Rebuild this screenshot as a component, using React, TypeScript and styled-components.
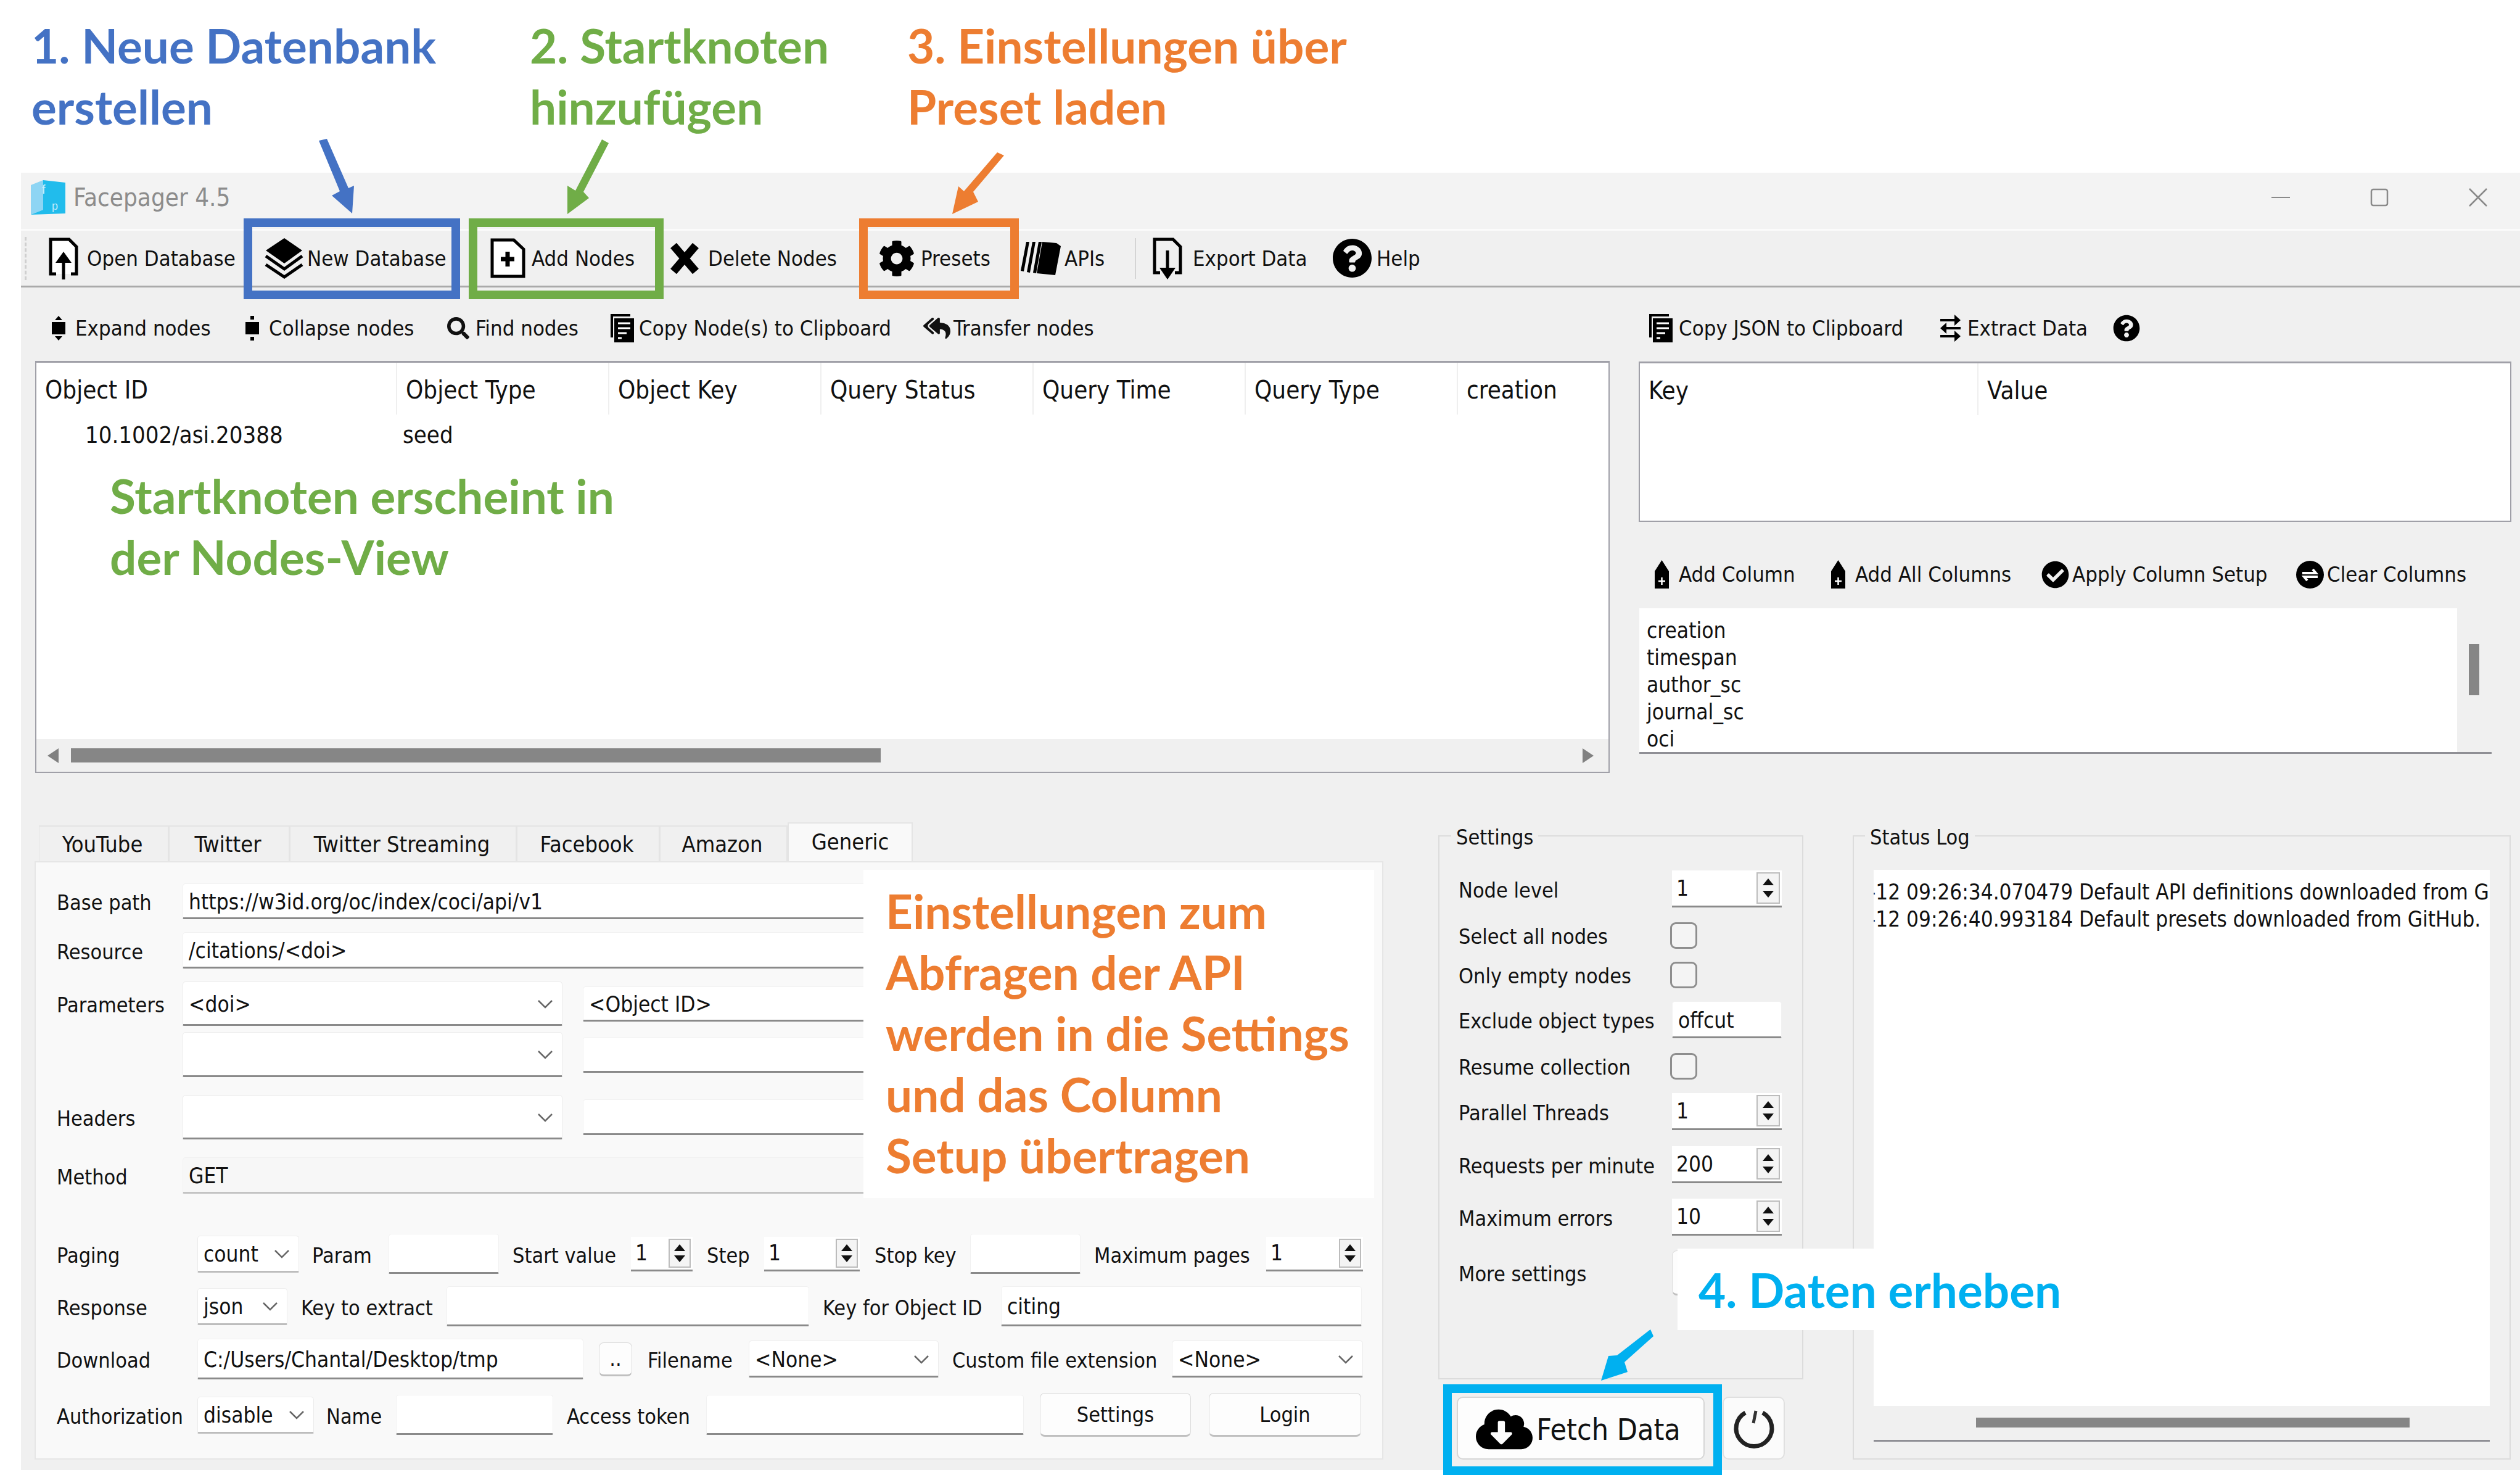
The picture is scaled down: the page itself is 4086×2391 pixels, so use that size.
import styled, { createGlobalStyle } from "styled-components";
import { FaCog, FaQuestionCircle, FaSearch, FaReplyAll, FaCheckCircle, FaCloudDownloadAlt } from "react-icons/fa";

const Global = createGlobalStyle`
  html, body { margin: 0; padding: 0; background: #fff; }
  * { box-sizing: border-box; }
`;

const UI = `"DejaVu Sans Condensed", "DejaVu Sans", sans-serif`;

const Page = styled.div`
  position: relative;
  width: 4086px;
  height: 2391px;
  background: #fff;
  overflow: hidden;
  display: flex;
  flex-direction: column;
  font-family: ${UI};
  color: #111;
`;
const Headings = styled.div`
  height: 280px;
  padding: 24px 0 0 51px;
  display: flex;
`;
const Heading = styled.div<{ $w: number; $c: string }>`
  width: ${(p) => p.$w}px;
  color: ${(p) => p.$c};
  font: 700 76.5px/99px Lato, sans-serif;
`;
const Win = styled.div`
  margin-left: 34px;
  height: 2103px;
  background: #f0f0f0;
`;
const TitleBar = styled.div`
  height: 91px;
  background: #f3f3f3;
  display: flex;
  align-items: center;
  padding: 0 53px 12px 16px;
`;
const Title = styled.span`
  margin-left: 13px;
  color: #8c8c8c;
  font-size: 40px;
  flex: 1;
`;
const WinButtons = styled.div`
  display: flex;
  gap: 130px;
  align-items: center;
`;
const Toolbar = styled.div`
  height: 95px;
  border-top: 3px solid #fbfbfb;
  border-bottom: 3px solid #aaa;
  padding-left: 6px;
  display: flex;
  align-items: center;
`;
const Grip = styled.div`
  width: 38px;
  height: 70px;
  flex: none;
  border-left: 3px dashed #cfcfcf;
`;
const ToolItem = styled.div<{ $w?: number; $gap?: number }>`
  ${(p) => (p.$w ? `width: ${p.$w}px;` : "")}
  flex: none;
  display: flex;
  align-items: center;
  gap: ${(p) => p.$gap ?? 9}px;
  font-size: 34.5px;
  white-space: nowrap;
`;
const Sep = styled.div`
  width: 28px;
  height: 66px;
  flex: none;
  border-left: 2px solid #d4d4d4;
`;
const Upper = styled.div`
  display: flex;
  padding-left: 23px;
  gap: 47px;
  align-items: flex-start;
`;
const LeftCol = styled.div`
  width: 2553px;
`;
const RightCol = styled.div`
  width: 1415px;
`;
const SubBar = styled.div<{ $h: number; $pl: number; $pt: number }>`
  height: ${(p) => p.$h}px;
  padding: ${(p) => p.$pt}px 0 0 ${(p) => p.$pl}px;
  display: flex;
  align-items: center;
`;
const TableBox = styled.div<{ $h: number }>`
  height: ${(p) => p.$h}px;
  background: #fff;
  border: 2px solid #a0a0a8;
  border-top-width: 3px;
  display: flex;
  flex-direction: column;
  font-size: 40px;
`;
const HeadRow = styled.div`
  display: flex;
  height: 84px;
  flex: none;
`;
const HeadCell = styled.div<{ $w?: number }>`
  ${(p) => (p.$w ? `width: ${p.$w}px;` : "flex: 1;")}
  padding: 4px 0 0 14px;
  display: flex;
  align-items: center;
  border-right: 2px solid #efefef;
  &:last-child { border-right: none; }
`;
const BodyRow = styled.div`
  display: flex;
  height: 50px;
  margin-top: 8px;
  flex: none;
  align-items: center;
  font-size: 38px;
`;
const Cell = styled.div<{ $w: number; $pl: number }>`
  width: ${(p) => p.$w}px;
  padding-left: ${(p) => p.$pl}px;
`;
const Spacer = styled.div`
  flex: 1;
`;
const HScroll = styled.div`
  height: 53px;
  background: #f0f0f0;
  flex: none;
  display: flex;
  align-items: center;
  padding: 0 24px 0 18px;
  gap: 20px;
`;
const ScrollThumb = styled.div<{ $w: number }>`
  width: ${(p) => p.$w}px;
  height: 23px;
  background: #868686;
`;
const ArrowGlyph = styled.div<{ $dir: "l" | "r" }>`
  width: 0;
  height: 0;
  border-top: 12px solid transparent;
  border-bottom: 12px solid transparent;
  ${(p) => (p.$dir === "l" ? "border-right: 18px solid #808080;" : "border-left: 18px solid #808080; margin-left: auto;")}
`;
const ColumnList = styled.div`
  width: 1382px;
  height: 236px;
  margin-left: 1px;
  display: flex;
  border-bottom: 3px solid #8f8f95;
  background: #f0f0f0;
`;
const ListText = styled.div`
  flex: 1;
  background: #fff;
  padding: 14px 0 0 12px;
  font-size: 35px;
  line-height: 44px;
  overflow: hidden;
`;
const VScroll = styled.div`
  width: 56px;
  padding: 58px 0 0 19px;
`;
const VThumb = styled.div`
  width: 17px;
  height: 83px;
  background: #868686;
`;
const Lower = styled.div`
  display: flex;
  margin-top: 80px;
  padding-left: 22px;
  align-items: flex-start;
`;
const TabWidget = styled.div`
  width: 2187px;
  flex: none;
`;
const TabBar = styled.div`
  height: 63px;
  padding-left: 7px;
  display: flex;
  align-items: flex-end;
`;
const Tab = styled.div<{ $w: number; $on?: boolean }>`
  width: ${(p) => p.$w}px;
  height: ${(p) => (p.$on ? 63 : 58)}px;
  background: ${(p) => (p.$on ? "#f9f9f9" : "#f0f0f0")};
  border: 2px solid #e4e4e4;
  border-bottom: none;
  border-left-width: ${(p) => (p.$on ? 2 : 1)}px;
  display: flex;
  align-items: center;
  justify-content: center;
  font-size: 36px;
  padding: 0 ${(p) => (p.$on ? 0 : 4)}px ${(p) => (p.$on ? 3 : 0)}px 0;
`;
const TabPane = styled.div`
  height: 970px;
  background: #f9f9f9;
  border: 2px solid #e6e6e6;
  padding: 0 33px 0 34px;
`;
const FormRow = styled.div<{ $h: number; $mt: number }>`
  display: flex;
  align-items: center;
  height: ${(p) => p.$h}px;
  margin-top: ${(p) => p.$mt}px;
`;
const FormLabel = styled.div<{ $w: number; $ml?: number }>`
  width: ${(p) => p.$w}px;
  margin-left: ${(p) => p.$ml ?? 0}px;
  padding-top: 4px;
  flex: none;
  font-size: 34px;
  white-space: nowrap;
`;
const Input = styled.div<{ $w?: number; $h: number; $ml?: number; $tint?: boolean }>`
  ${(p) => (p.$w ? `width: ${p.$w}px; flex: none;` : "flex: 1;")}
  height: ${(p) => p.$h}px;
  margin-left: ${(p) => p.$ml ?? 0}px;
  background: ${(p) => (p.$tint ? "#f7f7f7" : "#fff")};
  border: 1px solid #f1f1f1;
  border-bottom: 3px solid ${(p) => (p.$tint ? "#c4c4c4" : "#8a8a8a")};
  border-radius: 5px 5px 2px 2px;
  padding: 3px 0 0 9px;
  display: flex;
  align-items: center;
  font-size: 35px;
  white-space: nowrap;
  overflow: hidden;
`;
const Combo = styled.div<{ $w: number; $h: number; $ml?: number; $soft?: boolean }>`
  width: ${(p) => p.$w}px;
  flex: none;
  height: ${(p) => p.$h}px;
  margin-left: ${(p) => p.$ml ?? 0}px;
  background: #fff;
  border: 1px solid #ececec;
  border-bottom: 3px solid ${(p) => (p.$soft ? "#bdbdbd" : "#8a8a8a")};
  border-radius: 5px 5px 2px 2px;
  padding: 3px 14px 0 9px;
  display: flex;
  align-items: center;
  justify-content: space-between;
  font-size: 35px;
`;
const SmallBtn = styled.div<{ $w: number; $h: number; $ml?: number }>`
  width: ${(p) => p.$w}px;
  height: ${(p) => p.$h}px;
  margin-left: ${(p) => p.$ml ?? 0}px;
  flex: none;
  background: #fdfdfd;
  border: 1px solid #dcdcdc;
  border-bottom: 3px solid #c0c0c0;
  border-radius: 8px;
  display: flex;
  align-items: center;
  justify-content: center;
  font-size: 34px;
`;
const SpinBox = styled.div<{ $w: number; $h: number; $ml?: number }>`
  width: ${(p) => p.$w}px;
  height: ${(p) => p.$h}px;
  margin-left: ${(p) => p.$ml ?? 0}px;
  flex: none;
  background: #fff;
  border-bottom: 3px solid #8a8a8a;
  padding: 3px 3px 3px 7px;
  display: flex;
  align-items: center;
  justify-content: space-between;
  font-size: 35px;
`;
const SpinBtns = styled.div<{ $w: number }>`
  width: ${(p) => p.$w}px;
  align-self: stretch;
  background: #f4f4f4;
  border: 2px solid #bcbcbc;
  display: flex;
  flex-direction: column;
  align-items: center;
  justify-content: space-evenly;
`;
const Tri = styled.div<{ $up?: boolean }>`
  width: 0;
  height: 0;
  border-left: 9px solid transparent;
  border-right: 9px solid transparent;
  ${(p) => (p.$up ? "border-bottom: 11px solid #111;" : "border-top: 11px solid #111;")}
`;
const SettingsCol = styled.div`
  width: 592px;
  margin: 21px 0 0 89px;
  flex: none;
`;
const Group = styled.div<{ $h: number }>`
  position: relative;
  height: ${(p) => p.$h}px;
  border: 2px solid #dcdcdc;
`;
const Legend = styled.span<{ $l: number }>`
  position: absolute;
  top: -21px;
  left: ${(p) => p.$l}px;
  padding: 0 8px;
  background: #f0f0f0;
  font-size: 34px;
  line-height: 44px;
`;
const SettingsBody = styled.div`
  padding: 48px 0 0 31px;
`;
const SetRow = styled.div<{ $h: number }>`
  height: ${(p) => p.$h}px;
  display: flex;
  align-items: center;
`;
const SetLabel = styled.div`
  width: 346px;
  padding-top: 3px;
  font-size: 34px;
  white-space: nowrap;
  flex: none;
`;
const Check = styled.div`
  width: 44px;
  height: 43px;
  margin-left: -3px;
  border: 3px solid #8e8e8e;
  border-radius: 9px;
  background: #f4f4f4;
`;
const FetchRow = styled.div`
  display: flex;
  margin: 28px 0 0 30px;
  gap: 29px;
`;
const FetchBtn = styled.div`
  width: 402px;
  height: 102px;
  background: #fdfdfd;
  border: 2px solid #d6d6d6;
  border-radius: 10px;
  display: flex;
  align-items: center;
  justify-content: center;
  gap: 6px;
  padding: 3px 8px 0 0;
  font-size: 48px;
`;
const TimerBtn = styled.div`
  width: 101px;
  height: 102px;
  background: #fbfbfb;
  border: 2px solid #e0e0e0;
  border-radius: 10px;
  display: flex;
  align-items: center;
  justify-content: center;
`;
const StatusCol = styled.div`
  width: 1067px;
  margin: 21px 0 0 80px;
  flex: none;
`;
const LogBox = styled.div`
  margin: 54px 0 0 32px;
  width: 999px;
  height: 927px;
  background: #fff;
  border-bottom: 3px solid #8f8f95;
  display: flex;
  flex-direction: column;
`;
const LogText = styled.div`
  flex: 1;
  padding-top: 14px;
  font-size: 34.8px;
  line-height: 44px;
  white-space: nowrap;
  overflow: hidden;
`;
const LogLine = styled.div`
  margin-left: -8px;
`;
const LogScroll = styled.div`
  height: 55px;
  background: #f0f0f0;
  padding: 19px 0 0 166px;
`;
const LogThumb = styled.div`
  width: 703px;
  height: 16px;
  background: #868686;
`;

// annotations drawn over the app
const Frame = styled.div<{ $x: number; $y: number; $w: number; $h: number; $c: string }>`
  position: absolute;
  left: ${(p) => p.$x}px;
  top: ${(p) => p.$y}px;
  width: ${(p) => p.$w}px;
  height: ${(p) => p.$h}px;
  border: 14px solid ${(p) => p.$c};
`;
const Arrows = styled.svg`
  position: absolute;
  inset: 0;
`;
const Callout = styled.div<{ $x: number; $y: number; $w?: number; $h?: number; $c: string; $bg?: boolean; $pl?: number; $pt?: number }>`
  position: absolute;
  left: ${(p) => p.$x}px;
  top: ${(p) => p.$y}px;
  ${(p) => (p.$w ? `width: ${p.$w}px;` : "")}
  ${(p) => (p.$h ? `height: ${p.$h}px;` : "")}
  ${(p) => (p.$bg ? "background: #fff;" : "")}
  padding: ${(p) => p.$pt ?? 0}px 0 0 ${(p) => p.$pl ?? 0}px;
  color: ${(p) => p.$c};
  font: 700 76.5px/99px Lato, sans-serif;
  white-space: pre;
`;

const Chevron = () => (
  <svg width="26" height="16" viewBox="0 0 26 16">
    <path d="M2 2 L13 13 L24 2" fill="none" stroke="#666" strokeWidth="2.5" />
  </svg>
);
const AppIcon = () => (
  <svg width="56" height="56" viewBox="0 0 56 56">
    <path d="M0 8 L20 0 V48 L0 56 Z" fill="#8ed5f4" />
    <path d="M20 0 L56 4 V54 L0 56 L20 48 Z" fill="#21bcec" />
    <text x="18" y="22" fontSize="20" fill="#cfeefb" fontFamily="Liberation Sans">f</text>
    <text x="34" y="48" fontSize="18" fill="#bfe9fa" fontFamily="Liberation Sans">p</text>
  </svg>
);
const DocUp = () => (
  <svg width="50" height="70" viewBox="0 0 50 70">
    <path d="M13 60 H4 V4 H34 L46 16 V60 H37" fill="#fff" stroke="#000" strokeWidth="5" />
    <path d="M25 69 V38" stroke="#000" strokeWidth="5" />
    <path d="M12 42 L25 24 L38 42 Z" fill="#000" />
  </svg>
);
const DocDown = () => (
  <svg width="50" height="70" viewBox="0 0 50 70">
    <path d="M13 58 H4 V4 H34 L46 16 V58 H37" fill="none" stroke="#000" strokeWidth="5" />
    <path d="M25 22 V54" stroke="#000" strokeWidth="5" />
    <path d="M12 50 L25 69 L38 50 Z" fill="#000" />
  </svg>
);
const DocPlus = () => (
  <svg width="57" height="66" viewBox="0 0 57 66">
    <path d="M3 3 H38 L54 18 V62 H3 Z" fill="#fff" stroke="#000" strokeWidth="5" />
    <path d="M28 22 V46 M17 34 H39" stroke="#000" strokeWidth="7" />
  </svg>
);
const Stack = () => (
  <svg width="65" height="66" viewBox="0 0 65 66">
    <path d="M33 0 L62 20 L33 41 L3 20 Z" fill="#000" />
    <path d="M3 29 L33 50 L62 29 M3 43 L33 63 L62 43" fill="none" stroke="#000" strokeWidth="5" />
  </svg>
);
const Cross = () => (
  <svg width="50" height="50" viewBox="0 0 50 50">
    <path d="M7 4 L43 46 M43 4 L7 46" stroke="#000" strokeWidth="13" />
  </svg>
);
const Books = () => (
  <svg width="65" height="55" viewBox="0 0 65 55">
    <path d="M0 48 L9 1 L14 1 L5 49 Z M10 50 L19 1 L24 1 L15 51 Z M20 51 L29 1 L34 1 L25 52 Z" fill="#000" />
    <path d="M35 1 L58 3 L65 8 L56 55 L26 52 Z" fill="#000" />
  </svg>
);
const Pill = ({ dots }: { dots?: boolean }) => (
  <svg width="22" height="42" viewBox="0 0 22 42">
    <rect x="0" y="11" width="22" height="20" fill="#000" />
    {dots ? (
      <>
        <rect x="8" y="1" width="6" height="6" fill="#000" />
        <rect x="8" y="35" width="6" height="6" fill="#000" />
      </>
    ) : (
      <>
        <path d="M11 1 L17 8 H5 Z" fill="#000" />
        <path d="M11 41 L17 34 H5 Z" fill="#000" />
      </>
    )}
  </svg>
);
const CopyDoc = () => (
  <svg width="40" height="46" viewBox="0 0 40 46">
    <path d="M2 0 H34 V4 H6 V38 H2 Z" fill="#000" />
    <rect x="8" y="7" width="32" height="39" fill="#000" />
    <path d="M14 15 H34 M14 23 H34 M14 31 H28 M14 39 H20" stroke="#fff" strokeWidth="3" />
  </svg>
);
const Extract = () => (
  <svg width="35" height="46" viewBox="0 0 35 46">
    <path d="M1 10 H26 M9 23 H34 M1 36 H26" stroke="#000" strokeWidth="4" />
    <path d="M24 1 L34 10 L24 19 Z M11 14 L1 23 L11 32 Z M24 27 L34 36 L24 45 Z" fill="#000" />
  </svg>
);
const AddCol = () => (
  <svg width="23" height="46" viewBox="0 0 23 46">
    <path d="M11.5 0 L23 18 V46 H0 V18 Z" fill="#000" />
    <path d="M11.5 28 V40 M6 34 H17" stroke="#fff" strokeWidth="2.5" />
  </svg>
);
const ClearCol = () => (
  <svg width="45" height="45" viewBox="0 0 45 45">
    <circle cx="22.5" cy="22.5" r="22.5" fill="#000" />
    <path d="M10 20 H32 L27 14 M35 26 H13 L18 32" fill="none" stroke="#fff" strokeWidth="4" />
  </svg>
);
const Timer = () => (
  <svg width="72" height="72" viewBox="0 0 72 72">
    <path d="M22 11 A29 29 0 1 0 50 11" fill="none" stroke="#222" strokeWidth="7" />
    <path d="M39 8 L35 28" stroke="#333" strokeWidth="5" />
  </svg>
);
const MinIcon = () => (
  <svg width="30" height="30" viewBox="0 0 30 30">
    <path d="M0 15 H30" stroke="#8a8a8a" strokeWidth="2" />
  </svg>
);
const MaxIcon = () => (
  <svg width="30" height="30" viewBox="0 0 30 30">
    <rect x="2" y="2" width="26" height="26" rx="3" fill="none" stroke="#8a8a8a" strokeWidth="2.5" />
  </svg>
);
const CloseIcon = () => (
  <svg width="30" height="30" viewBox="0 0 30 30">
    <path d="M1 1 L29 29 M29 1 L1 29" stroke="#8a8a8a" strokeWidth="2.5" />
  </svg>
);

const Spin = ({ v, w, h, btn, ml }: { v: string; w: number; h: number; btn: number; ml?: number }) => (
  <SpinBox $w={w} $h={h} $ml={ml}>
    {v}
    <SpinBtns $w={btn}>
      <Tri $up />
      <Tri />
    </SpinBtns>
  </SpinBox>
);

const cols = [585, 344, 344, 344, 344, 344];
const colNames = ["Object ID", "Object Type", "Object Key", "Query Status", "Query Time", "Query Type"];

export default function App() {
  return (
    <Page>
      <Global />
      <Headings>
        <Heading $w={808} $c="#4472c4">1. Neue Datenbank<br />erstellen</Heading>
        <Heading $w={612} $c="#70ad47">2. Startknoten<br />hinzufügen</Heading>
        <Heading $w={900} $c="#ed7d31">3. Einstellungen über<br />Preset laden</Heading>
      </Headings>
      <Win>
        <TitleBar>
          <AppIcon />
          <Title>Facepager 4.5</Title>
          <WinButtons>
            <MinIcon />
            <MaxIcon />
            <CloseIcon />
          </WinButtons>
        </TitleBar>
        <Toolbar>
          <Grip />
          <ToolItem $w={350} $gap={13}><DocUp />Open Database</ToolItem>
          <ToolItem $w={367} $gap={5}><Stack />New Database</ToolItem>
          <ToolItem $w={290} $gap={10}><DocPlus />Add Nodes</ToolItem>
          <ToolItem $w={339} $gap={13}><Cross />Delete Nodes</ToolItem>
          <ToolItem $w={231} $gap={9}><FaCog size={60} color="#000" />Presets</ToolItem>
          <ToolItem $w={185} $gap={6}><Books />APIs</ToolItem>
          <Sep />
          <ToolItem $w={292} $gap={16}><DocDown />Export Data</ToolItem>
          <ToolItem $gap={7}><FaQuestionCircle size={65} color="#000" />Help</ToolItem>
        </Toolbar>
        <Upper>
          <LeftCol>
            <SubBar $h={119} $pl={27} $pt={12}>
              <ToolItem $w={314} $gap={16}><Pill />Expand nodes</ToolItem>
              <ToolItem $w={327} $gap={16}><Pill dots />Collapse nodes</ToolItem>
              <ToolItem $w={263} $gap={10}><FaSearch size={36} color="#111" />Find nodes</ToolItem>
              <ToolItem $w={509} $gap={8}><CopyDoc />Copy Node(s) to Clipboard</ToolItem>
              <ToolItem $gap={5}><FaReplyAll size={44} color="#111" />Transfer nodes</ToolItem>
            </SubBar>
            <TableBox $h={668}>
              <HeadRow>
                {colNames.map((n, i) => (
                  <HeadCell key={n} $w={cols[i]}>{n}</HeadCell>
                ))}
                <HeadCell>creation</HeadCell>
              </HeadRow>
              <BodyRow>
                <Cell $w={585} $pl={79}>10.1002/asi.20388</Cell>
                <Cell $w={400} $pl={9}>seed</Cell>
              </BodyRow>
              <Spacer />
              <HScroll>
                <ArrowGlyph $dir="l" />
                <ScrollThumb $w={1313} />
                <ArrowGlyph $dir="r" />
              </HScroll>
            </TableBox>
          </LeftCol>
          <RightCol>
            <SubBar $h={120} $pl={15} $pt={12}>
              <ToolItem $w={473} $gap={10}><CopyDoc />Copy JSON to Clipboard</ToolItem>
              <ToolItem $w={281} $gap={10}><Extract />Extract Data</ToolItem>
              <FaQuestionCircle size={44} color="#000" />
            </SubBar>
            <TableBox $h={260}>
              <HeadRow>
                <HeadCell $w={549}>Key</HeadCell>
                <HeadCell>Value</HeadCell>
              </HeadRow>
            </TableBox>
            <SubBar $h={140} $pl={26} $pt={30}>
              <ToolItem $w={286} $gap={16}><AddCol />Add Column</ToolItem>
              <ToolItem $w={341} $gap={16}><AddCol />Add All Columns</ToolItem>
              <ToolItem $w={413} $gap={5}><FaCheckCircle size={45} color="#000" />Apply Column Setup</ToolItem>
              <ToolItem $gap={5}><ClearCol />Clear Columns</ToolItem>
            </SubBar>
            <ColumnList>
              <ListText>
                creation<br />timespan<br />author_sc<br />journal_sc<br />oci
              </ListText>
              <VScroll><VThumb /></VScroll>
            </ColumnList>
          </RightCol>
        </Upper>
        <Lower>
          <TabWidget>
            <TabBar>
              <Tab $w={211}>YouTube</Tab>
              <Tab $w={196}>Twitter</Tab>
              <Tab $w={368}>Twitter Streaming</Tab>
              <Tab $w={232}>Facebook</Tab>
              <Tab $w={207}>Amazon</Tab>
              <Tab $w={203} $on>Generic</Tab>
            </TabBar>
            <TabPane>
              <FormRow $h={58} $mt={34}>
                <FormLabel $w={204}>Base path</FormLabel>
                <Input $h={58}>https://w3id.org/oc/index/coci/api/v1</Input>
              </FormRow>
              <FormRow $h={59} $mt={21}>
                <FormLabel $w={204}>Resource</FormLabel>
                <Input $h={59}>/citations/&lt;doi&gt;</Input>
              </FormRow>
              <FormRow $h={72} $mt={21}>
                <FormLabel $w={204}>Parameters</FormLabel>
                <Combo $w={616} $h={72}>&lt;doi&gt;<Chevron /></Combo>
                <Input $h={57} $ml={33}>&lt;Object ID&gt;</Input>
              </FormRow>
              <FormRow $h={73} $mt={10}>
                <FormLabel $w={204} />
                <Combo $w={616} $h={73}><span /><Chevron /></Combo>
                <Input $h={58} $ml={33} />
              </FormRow>
              <FormRow $h={72} $mt={29}>
                <FormLabel $w={204}>Headers</FormLabel>
                <Combo $w={616} $h={72}><span /><Chevron /></Combo>
                <Input $h={58} $ml={33} />
              </FormRow>
              <FormRow $h={59} $mt={29}>
                <FormLabel $w={204}>Method</FormLabel>
                <Input $h={59} $tint>GET</Input>
              </FormRow>
              <FormRow $h={65} $mt={65}>
                <FormLabel $w={228}>Paging</FormLabel>
                <Combo $w={165} $h={60} $soft>count<Chevron /></Combo>
                <FormLabel $w={124} $ml={21}>Param</FormLabel>
                <Input $w={179} $h={65} />
                <FormLabel $w={192} $ml={22}>Start value</FormLabel>
                <Spin v="1" w={100} h={56} btn={36} />
                <FormLabel $w={93} $ml={23}>Step</FormLabel>
                <Spin v="1" w={155} h={56} btn={36} />
                <FormLabel $w={155} $ml={24}>Stop key</FormLabel>
                <Input $w={179} $h={65} />
                <FormLabel $w={279} $ml={22}>Maximum pages</FormLabel>
                <Spin v="1" w={157} h={56} btn={36} />
              </FormRow>
              <FormRow $h={65} $mt={20}>
                <FormLabel $w={228}>Response</FormLabel>
                <Combo $w={146} $h={60} $soft>json<Chevron /></Combo>
                <FormLabel $w={236} $ml={22}>Key to extract</FormLabel>
                <Input $w={588} $h={65} />
                <FormLabel $w={289} $ml={22}>Key for Object ID</FormLabel>
                <Input $h={65}>citing</Input>
              </FormRow>
              <FormRow $h={66} $mt={20}>
                <FormLabel $w={228}>Download</FormLabel>
                <Input $w={626} $h={66}>C:/Users/Chantal/Desktop/tmp</Input>
                <SmallBtn $w={54} $h={55} $ml={25}>..</SmallBtn>
                <FormLabel $w={164} $ml={25}>Filename</FormLabel>
                <Combo $w={308} $h={60}>&lt;None&gt;<Chevron /></Combo>
                <FormLabel $w={356} $ml={22}>Custom file extension</FormLabel>
                <Combo $w={310} $h={60}>&lt;None&gt;<Chevron /></Combo>
              </FormRow>
              <FormRow $h={71} $mt={22}>
                <FormLabel $w={228}>Authorization</FormLabel>
                <Combo $w={189} $h={60} $soft>disable<Chevron /></Combo>
                <FormLabel $w={113} $ml={20}>Name</FormLabel>
                <Input $w={255} $h={65} />
                <FormLabel $w={226} $ml={22}>Access token</FormLabel>
                <Input $w={515} $h={65} />
                <SmallBtn $w={245} $h={71} $ml={26}>Settings</SmallBtn>
                <SmallBtn $w={247} $h={71} $ml={29}>Login</SmallBtn>
              </FormRow>
            </TabPane>
          </TabWidget>
          <SettingsCol>
            <Group $h={882}>
              <Legend $l={19}>Settings</Legend>
              <SettingsBody>
                <SetRow $h={74}>
                  <SetLabel>Node level</SetLabel>
                  <Spin v="1" w={178} h={60} btn={38} />
                </SetRow>
                <SetRow $h={76}><SetLabel>Select all nodes</SetLabel><Check /></SetRow>
                <SetRow $h={52}><SetLabel>Only empty nodes</SetLabel><Check /></SetRow>
                <SetRow $h={94}>
                  <SetLabel>Exclude object types</SetLabel>
                  <Input $w={178} $h={60}>offcut</Input>
                </SetRow>
                <SetRow $h={56}><SetLabel>Resume collection</SetLabel><Check /></SetRow>
                <SetRow $h={92}>
                  <SetLabel>Parallel Threads</SetLabel>
                  <Spin v="1" w={178} h={60} btn={38} />
                </SetRow>
                <SetRow $h={80}>
                  <SetLabel>Requests per minute</SetLabel>
                  <Spin v="200" w={178} h={60} btn={38} />
                </SetRow>
                <SetRow $h={90}>
                  <SetLabel>Maximum errors</SetLabel>
                  <Spin v="10" w={178} h={60} btn={38} />
                </SetRow>
                <SetRow $h={90}>
                  <SetLabel>More settings</SetLabel>
                  <SmallBtn $w={178} $h={73} />
                </SetRow>
              </SettingsBody>
            </Group>
            <FetchRow>
              <FetchBtn><FaCloudDownloadAlt size={92} color="#000" />Fetch Data</FetchBtn>
              <TimerBtn><Timer /></TimerBtn>
            </FetchRow>
          </SettingsCol>
          <StatusCol>
            <Group $h={1012}>
              <Legend $l={18}>Status Log</Legend>
              <LogBox>
                <LogText>
                  <LogLine>-12 09:26:34.070479 Default API definitions downloaded from GitHub.</LogLine>
                  <LogLine>-12 09:26:40.993184 Default presets downloaded from GitHub.</LogLine>
                </LogText>
                <LogScroll><LogThumb /></LogScroll>
              </LogBox>
            </Group>
          </StatusCol>
        </Lower>
      </Win>

      <Frame $x={395} $y={354} $w={351} $h={131} $c="#4472c4" />
      <Frame $x={760} $y={354} $w={316} $h={131} $c="#70ad47" />
      <Frame $x={1393} $y={354} $w={259} $h={131} $c="#ed7d31" />
      <Frame $x={2340} $y={2244} $w={452} $h={147} $c="#00b0f0" />
      <Arrows width="4086" height="2391" viewBox="0 0 4086 2391">
        <polygon points="517,228 530,225 565,305 574,301 571,346 538,317 551,310" fill="#4472c4" />
        <polygon points="976,226 987,232 946,311 955,321 920,347 920,301 933,309" fill="#70ad47" />
        <polygon points="1617,247 1628,252 1578,311 1586,327 1544,347 1554,302 1563,310" fill="#ed7d31" />
        <polygon points="2676,2155 2681,2166 2634,2208 2639,2224 2596,2238 2608,2198 2622,2197" fill="#00b0f0" />
      </Arrows>
      <Callout $x={178} $y={754} $c="#70ad47">{"Startknoten erscheint in\nder Nodes-View"}</Callout>
      <Callout $x={1400} $y={1410} $w={828} $h={532} $pl={36} $pt={17} $c="#ed7d31" $bg>
        {"Einstellungen zum\nAbfragen der API\nwerden in die Settings\nund das Column\nSetup übertragen"}
      </Callout>
      <Callout $x={2720} $y={2024} $w={650} $h={132} $pl={34} $pt={17} $c="#00b0f0" $bg>4. Daten erheben</Callout>
    </Page>
  );
}
